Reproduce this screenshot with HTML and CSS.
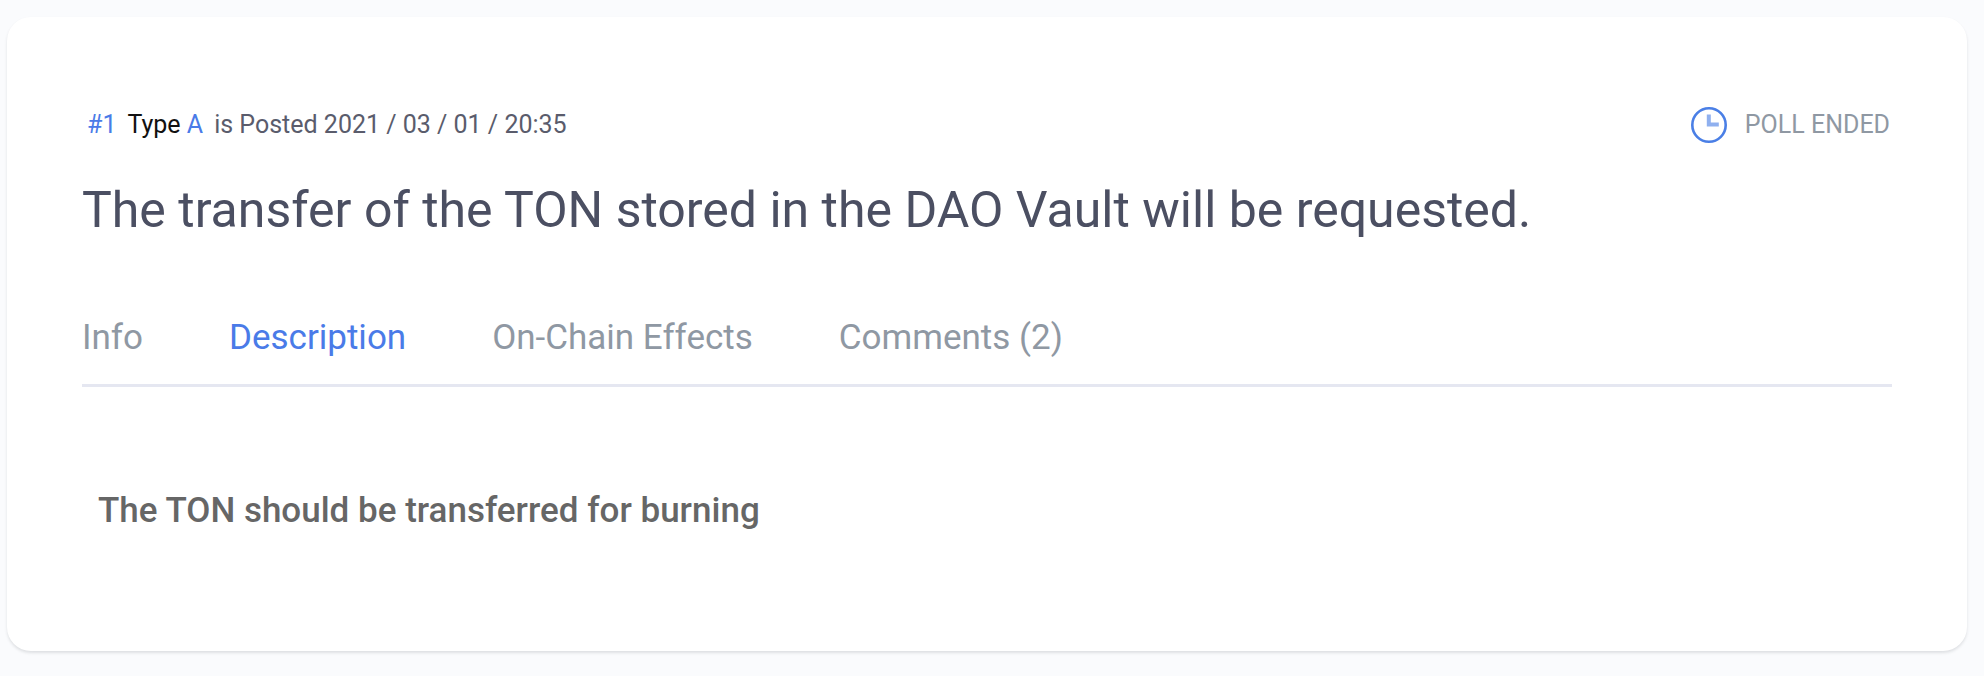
FILE: index.html
```html
<!DOCTYPE html>
<html lang="en">
<head>
<meta charset="utf-8">
<meta name="viewport" content="width=device-width, initial-scale=1">
<title>Agenda #1</title>
<link rel="stylesheet" href="styles.css">
</head>
<body>
<main class="card">
  <header class="meta">
    <p class="meta-info">
      <span class="accent">#1</span>
      <span class="type">Type <span class="accent">A</span></span>
      <span>is Posted 2021 / 03 / 01 / 20:35</span>
    </p>
    <p class="status">
      <svg class="clock" viewBox="0 0 36 36" aria-hidden="true">
        <circle cx="18" cy="18" r="16.7"/>
        <path d="M17.8 7.5v10h10"/>
      </svg>
      <span>POLL ENDED</span>
    </p>
  </header>
  <h1 class="title">The transfer of the TON stored in the DAO Vault will be requested.</h1>
  <nav class="tabs">
    <a class="tab" href="#info">Info</a>
    <a class="tab tab-active" href="#description" aria-current="page">Description</a>
    <a class="tab" href="#effects">On-Chain Effects</a>
    <a class="tab" href="#comments">Comments (2)</a>
  </nav>
  <section class="description" id="description">
    <p>The TON should be transferred for burning</p>
  </section>
</main>
</body>
</html>
```
FILE: styles.css
```css
* {
  box-sizing: border-box;
}

body {
  margin: 0;
  padding: 17px 17px 24px 7px;
  background: #fafbfd;
  font-family: Roboto, "Liberation Sans", sans-serif;
}

h1,
p {
  margin: 0;
}

.card {
  padding: 89px 75px 120px;
  border-radius: 24px;
  background: #fff;
  box-shadow: 0 2px 3px rgba(60, 64, 72, 0.14);
}

.meta {
  display: flex;
  justify-content: space-between;
  align-items: center;
  line-height: 38px;
}

.meta-info {
  display: flex;
  gap: 11px;
  padding-left: 5px;
  font-size: 25px;
  color: #5a5c6c;
}

.type {
  color: #111;
}

.accent {
  color: #4a7be8;
}

.status {
  display: flex;
  align-items: center;
  gap: 18px;
  padding-right: 2px;
  font-size: 25px;
  color: #8f98a3;
}

.clock {
  width: 36px;
  height: 36px;
  fill: none;
  stroke: #4a7fe6;
  stroke-width: 2.6;
}

.clock path {
  stroke: #8fb0ef;
  stroke-width: 4;
}

.title {
  margin-top: 36px;
  font-size: 50px;
  font-weight: 400;
  line-height: 60px;
  color: #4b4f62;
}

.tabs {
  display: flex;
  gap: 86px;
  margin-top: 78px;
  padding-bottom: 26px;
  border-bottom: 3px solid #e5e7f1;
  font-size: 35px;
  line-height: 40px;
}

.tab {
  color: #8f98a3;
  text-decoration: none;
}

.tab-active {
  color: #4a7be8;
}

.description {
  padding: 104px 16px 0;
  font-size: 35px;
  font-weight: 500;
  line-height: 40px;
  color: #666;
}
```
